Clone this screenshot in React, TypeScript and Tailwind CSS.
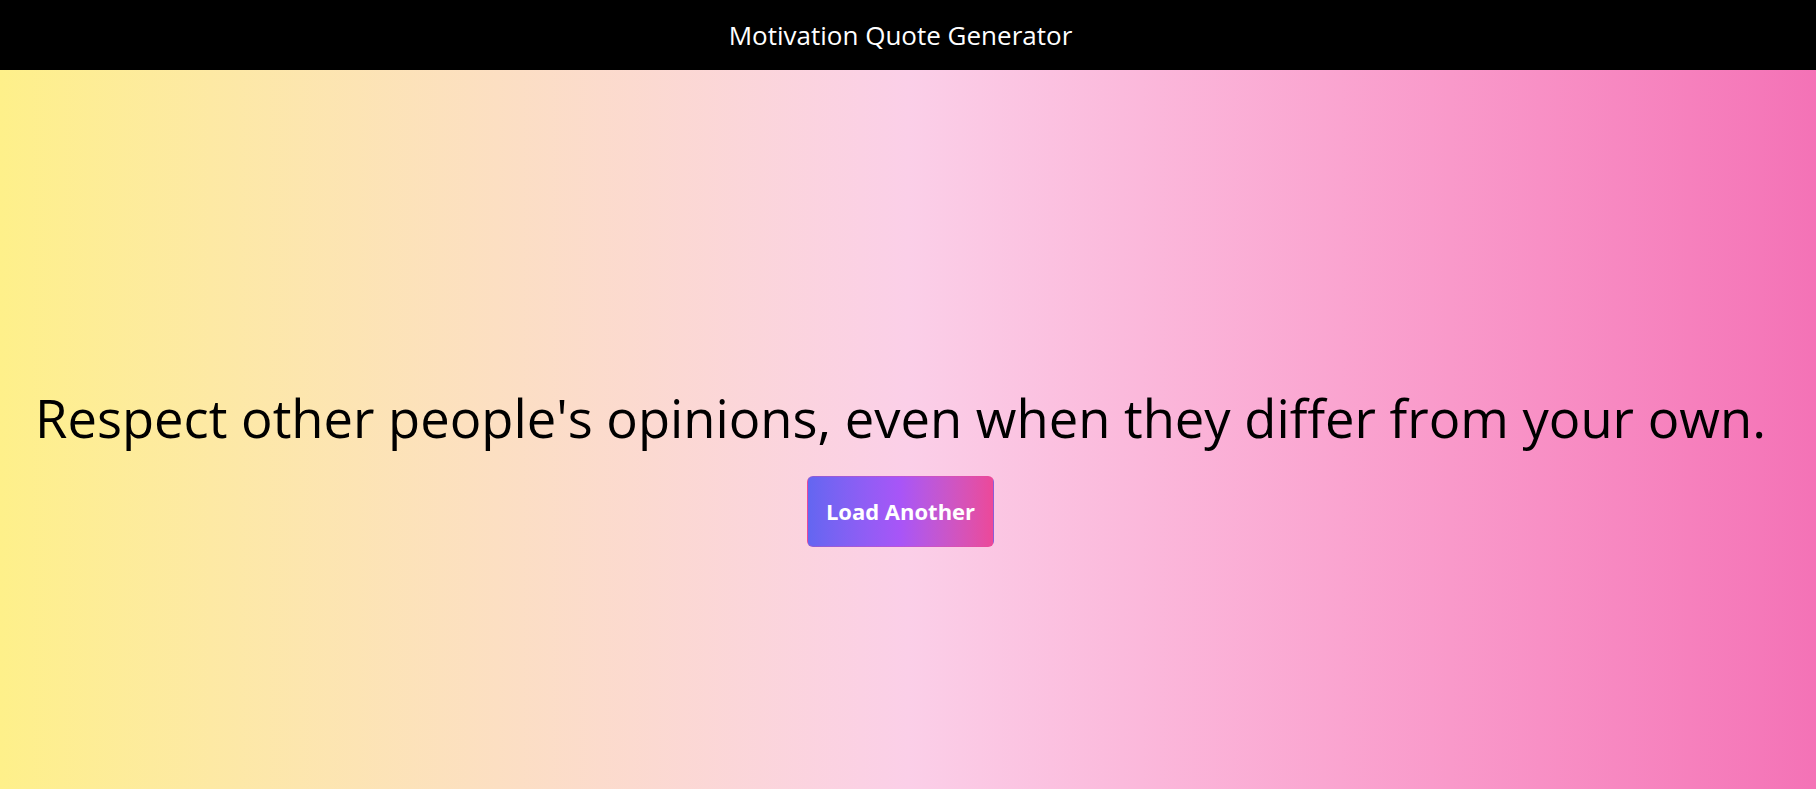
import React, { useState } from "react";

const quotes = [
  "Respect other people's opinions, even when they differ from your own.",
  "The secret of getting ahead is getting started.",
  "It always seems impossible until it's done.",
];

export default function App() {
  const [index, setIndex] = useState(0);

  return (
    <div className="font-['Open_Sans',sans-serif]">
      <header className="h-[70px] bg-black flex items-center justify-center pr-[15px]">
        <h1 className="text-white text-[26px]">Motivation Quote Generator</h1>
      </header>

      <main className="h-screen pr-[15px] bg-gradient-to-r from-[#fef08a] via-[#fbcfe8] to-[#f472b6] flex flex-col items-center justify-center gap-[22px]">
        <p className="text-black text-[52.5px] font-medium leading-[72px] text-center">
          {quotes[index]}
        </p>
        <button
          onClick={() => setIndex((index + 1) % quotes.length)}
          className="h-[71px] px-[18px] rounded-md border border-[#ec4899]/30 bg-gradient-to-r from-[#6366f1] via-[#a855f7] to-[#ec4899] text-white text-[22px] font-bold"
        >
          Load Another
        </button>
      </main>
    </div>
  );
}
